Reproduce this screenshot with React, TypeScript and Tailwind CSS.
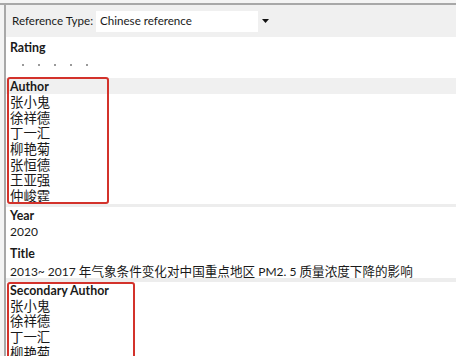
import React from "react";

const latin = { fontFamily: 'Lato,"Noto Sans","Noto Sans CJK SC",sans-serif' };

function Mixed({ text, cjkSize }: { text: string; cjkSize: string }) {
  const parts = text.split(/([\u4e00-\u9fff]+)/);
  return (
    <>
      {parts.map((p, i) =>
        /[\u4e00-\u9fff]/.test(p) ? (
          <span
            key={i}
            className={`inline-block leading-none ${cjkSize}`}
            style={{ fontFamily: '"Noto Sans CJK SC",sans-serif' }}
          >
            {p}
          </span>
        ) : (
          <span key={i}>{p}</span>
        )
      )}
    </>
  );
}

function Line({
  text,
  bold = false,
  h = "h-[15.7px]",
  pt = "pt-[2px]",
  cjkSize = "text-[13.4px]",
}: {
  text: string;
  bold?: boolean;
  h?: string;
  pt?: string;
  cjkSize?: string;
}) {
  return (
    <div
      className={`${h} ${pt} shrink-0 flex items-center pl-[4px] leading-none text-[#1a1a1a] whitespace-nowrap ${
        bold ? "font-bold text-[12.4px]" : "text-[12px]"
      }`}
      style={latin}
    >
      <span className="whitespace-pre leading-none">
        <Mixed text={text} cjkSize={cjkSize} />
      </span>
    </div>
  );
}

export default function App() {
  const authors = ["张小鬼", "徐祥德", "丁一汇", "柳艳菊", "张恒德", "王亚强", "仲峻霆"];
  return (
    <div className="relative w-[456px] h-[356px] overflow-hidden bg-white">
      <div className="h-[3px] bg-[#f4f4f4]" />
      <div className="h-[2px] bg-[#a8a8a8]" />
      <div className="flex h-[351px]">
        <div className="w-[4px] bg-[#f4f4f4]" />
        <div className="w-[2px] bg-[#a8a8a8]" />
        <div className="flex-1 flex flex-col">
          {/* header */}
          <div className="h-[32px] shrink-0 bg-[#f0f0f0] flex items-center pl-[6px]" style={latin}>
            <span className="text-[11.6px] text-[#1a1a1a]">Reference Type:</span>
            <div className="ml-[3px] w-[162px] h-[21px] bg-white flex items-center pl-[4px] text-[11.6px] text-[#1a1a1a]">
              Chinese reference
            </div>
            <div className="w-[14px] h-[21px] flex items-center justify-center">
              <svg width="7" height="4" viewBox="0 0 7 4">
                <path d="M0 0h7L3.5 4z" fill="#111" />
              </svg>
            </div>
          </div>
          <div className="h-[2px] shrink-0" />
          <Line bold h="h-[16px]" text="Rating" />
          <div className="h-[16px] shrink-0 flex items-center pt-[4px] pl-[16px] gap-[14px]">
            {[0, 1, 2, 3, 4].map((i) => (
              <div key={i} className="w-[2px] h-[2px] bg-[#9a9a9a]" />
            ))}
          </div>
          <div className="h-[7px] shrink-0" />
          <div className="bg-[#f0f0f0] shrink-0">
            <Line bold h="h-[16px]" text="Author" />
          </div>
          {authors.map((a) => (
            <Line key={a} text={a} pt="pt-0" />
          ))}
          <div className="h-[3px] shrink-0 bg-[#ededed]" />
          <Line bold h="h-[16px]" text="Year" />
          <Line h="h-[17px]" text="2020" />
          <div className="h-[5px] shrink-0" />
          <Line bold h="h-[16px]" text="Title" />
          <Line
            h="h-[17px]"
            pt="pt-[4px]"
            cjkSize="text-[12.6px]"
            text="2013~ 2017 年气象条件变化对中国重点地区 PM2. 5 质量浓度下降的影响"
          />
          <div className="h-[4px] shrink-0 bg-[#ededed]" />
          <Line bold h="h-[16px]" text="Secondary Author" />
          {authors.slice(0, 4).map((a) => (
            <Line key={a} text={a} pt="pt-0" />
          ))}
        </div>
      </div>
      {/* annotation boxes */}
      <div className="absolute left-[7px] top-[77px] w-[102px] h-[127px] border-[2.5px] border-[#d3322b] rounded-[3px]" />
      <div className="absolute left-[7px] top-[282px] w-[128px] h-[90px] border-[2.5px] border-[#d3322b] rounded-[3px]" />
    </div>
  );
}
